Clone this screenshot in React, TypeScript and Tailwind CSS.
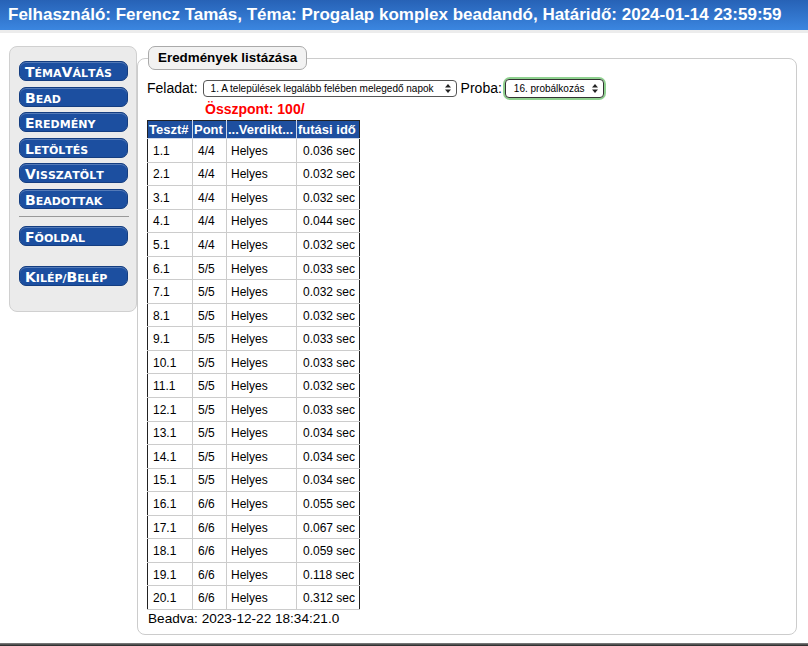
import React from "react";

const rows: [string, string, string][] = [
  ["1.1", "4/4", "0.036 sec"],
  ["2.1", "4/4", "0.032 sec"],
  ["3.1", "4/4", "0.032 sec"],
  ["4.1", "4/4", "0.044 sec"],
  ["5.1", "4/4", "0.032 sec"],
  ["6.1", "5/5", "0.033 sec"],
  ["7.1", "5/5", "0.032 sec"],
  ["8.1", "5/5", "0.032 sec"],
  ["9.1", "5/5", "0.033 sec"],
  ["10.1", "5/5", "0.033 sec"],
  ["11.1", "5/5", "0.032 sec"],
  ["12.1", "5/5", "0.033 sec"],
  ["13.1", "5/5", "0.034 sec"],
  ["14.1", "5/5", "0.034 sec"],
  ["15.1", "5/5", "0.034 sec"],
  ["16.1", "6/6", "0.055 sec"],
  ["17.1", "6/6", "0.067 sec"],
  ["18.1", "6/6", "0.059 sec"],
  ["19.1", "6/6", "0.118 sec"],
  ["20.1", "6/6", "0.312 sec"],
];

function SmallCaps({ text }: { text: string }) {
  return (
    <>
      {Array.from(text).map((ch, i) => {
        const isUpper = ch !== ch.toLowerCase();
        return isUpper ? (
          <span key={i} className="text-[14px]">{ch}</span>
        ) : (
          <span key={i} className="text-[11px]">{ch.toUpperCase()}</span>
        );
      })}
    </>
  );
}

function NavButton({ label }: { label: string }) {
  return (
    <div className="h-[20px] w-[109px] rounded-[7px] bg-[#1c4fa0] border border-[#143d80] shadow-[inset_0_1px_0_rgba(255,255,255,0.25)] flex items-baseline pt-[3px] pl-[5px] text-white font-bold leading-none whitespace-nowrap [font-family:'DejaVu_Sans',Verdana,sans-serif]">
      <SmallCaps text={label} />
    </div>
  );
}

function Arrows() {
  return (
    <svg width="6" height="9" viewBox="0 0 6 9" className="shrink-0">
      <path d="M3 0 L6 3.5 L0 3.5 Z" fill="#222" />
      <path d="M3 9 L6 5.5 L0 5.5 Z" fill="#222" />
    </svg>
  );
}

export default function App() {
  return (
    <div className="w-[808px] h-[646px] overflow-hidden bg-white flex flex-col [font-family:'Liberation_Sans',Arial,sans-serif] text-black">
      <div className="h-[30px] shrink-0 bg-gradient-to-b from-[#2762b6] to-[#3b86e0] flex items-center pl-[8px] text-white font-bold text-[17px] whitespace-nowrap">
        Felhasználó: Ferencz Tamás, Téma: Progalap komplex beadandó, Határidő: 2024-01-14 23:59:59
      </div>
      <div className="h-[3px] shrink-0 bg-[#ececec]" />
      <div className="flex-1 flex items-start pt-[13px] pl-[9px] pr-[11px]">
        <div className="w-[128px] shrink-0 bg-[#ebebeb] border border-[#d0d0d0] rounded-[8px] pt-[14px] pb-[25px] pl-[9px] flex flex-col">
          <div className="flex flex-col gap-[5.6px]">
            <NavButton label="TémaVáltás" />
            <NavButton label="Bead" />
            <NavButton label="Eredmény" />
            <NavButton label="Letöltés" />
            <NavButton label="Visszatölt" />
            <NavButton label="Beadottak" />
          </div>
          <div className="h-px w-[110px] bg-[#999] mt-[7px] mb-[9px]" />
          <NavButton label="Főoldal" />
          <div className="h-[20px]" />
          <NavButton label="Kilép/Belép" />
        </div>
        <fieldset className="flex-1 h-[589px] border border-[#cccccc] rounded-[8px] pl-[10px] pr-[10px] pt-[8px]">
          <legend className="h-[24px] px-[9px] border border-[#aaa] rounded-[7px] bg-[#f2f2f2] font-bold text-[13.4px] flex items-center">
            Eredmények listázása
          </legend>
          <div className="flex items-center h-[20px] text-[14px] -ml-px">
            <span>Feladat:</span>
            <div className="ml-[5px] w-[254px] h-[17px] border border-[#555] rounded-[4px] bg-white flex items-center pl-[7px] pr-[5px] text-[10px]">
              <span className="flex-1 whitespace-nowrap overflow-hidden">1. A települések legalább felében melegedő napok</span>
              <Arrows />
            </div>
            <span className="ml-[4px]">Proba:</span>
            <div className="ml-[3px] rounded-[5px] shadow-[0_0_0_2px_#8fd18f]">
              <div className="w-[99px] h-[19px] border border-[#333] rounded-[4px] bg-white flex items-center pl-[8px] pr-[5px] text-[10px]">
                <span className="flex-1 whitespace-nowrap">16. probálkozás</span>
                <Arrows />
              </div>
            </div>
          </div>
          <div className="pl-[57px] mt-[1px] h-[21px] flex items-center text-[#ff0000] font-bold text-[14px]">
            Összpont: 100/
          </div>
          <table className="border-collapse border border-[#222] text-[12px] -ml-px">
            <thead>
              <tr className="h-[18px] bg-[#1e4f9f] text-white font-bold text-[13px]">
                <th className="w-[45px] px-[1px] text-left border border-[#cfd8e8] border-l-[#222] border-t-[#222] leading-none">Teszt#</th>
                <th className="w-[34px] px-[1px] text-left border border-[#cfd8e8] border-t-[#222] leading-none">Pont</th>
                <th className="w-[70px] px-[1px] text-left border border-[#cfd8e8] border-t-[#222] leading-none">...Verdikt...</th>
                <th className="w-[63px] px-[1px] text-left border border-[#cfd8e8] border-r-[#222] border-t-[#222] leading-none whitespace-nowrap">futási idő</th>
              </tr>
            </thead>
            <tbody>
              {rows.map((r) => (
                <tr key={r[0]} className="h-[23.55px]">
                  <td className="pl-[5px] pt-[1px] border border-[#cccccc] border-l-[#222]">{r[0]}</td>
                  <td className="pl-[5px] pt-[1px] border border-[#cccccc]">{r[1]}</td>
                  <td className="pl-[4px] pt-[1px] border border-[#cccccc]">Helyes</td>
                  <td className="pl-[6px] pt-[1px] border border-[#cccccc] border-r-[#222] whitespace-nowrap">{r[2]}</td>
                </tr>
              ))}
            </tbody>
          </table>
          <div className="text-[13.6px] leading-[16px] mt-[1px]">Beadva: 2023-12-22 18:34:21.0</div>
        </fieldset>
      </div>
      <div className="h-[3px] shrink-0 bg-gradient-to-b from-[#888] to-[#222]" />
    </div>
  );
}
